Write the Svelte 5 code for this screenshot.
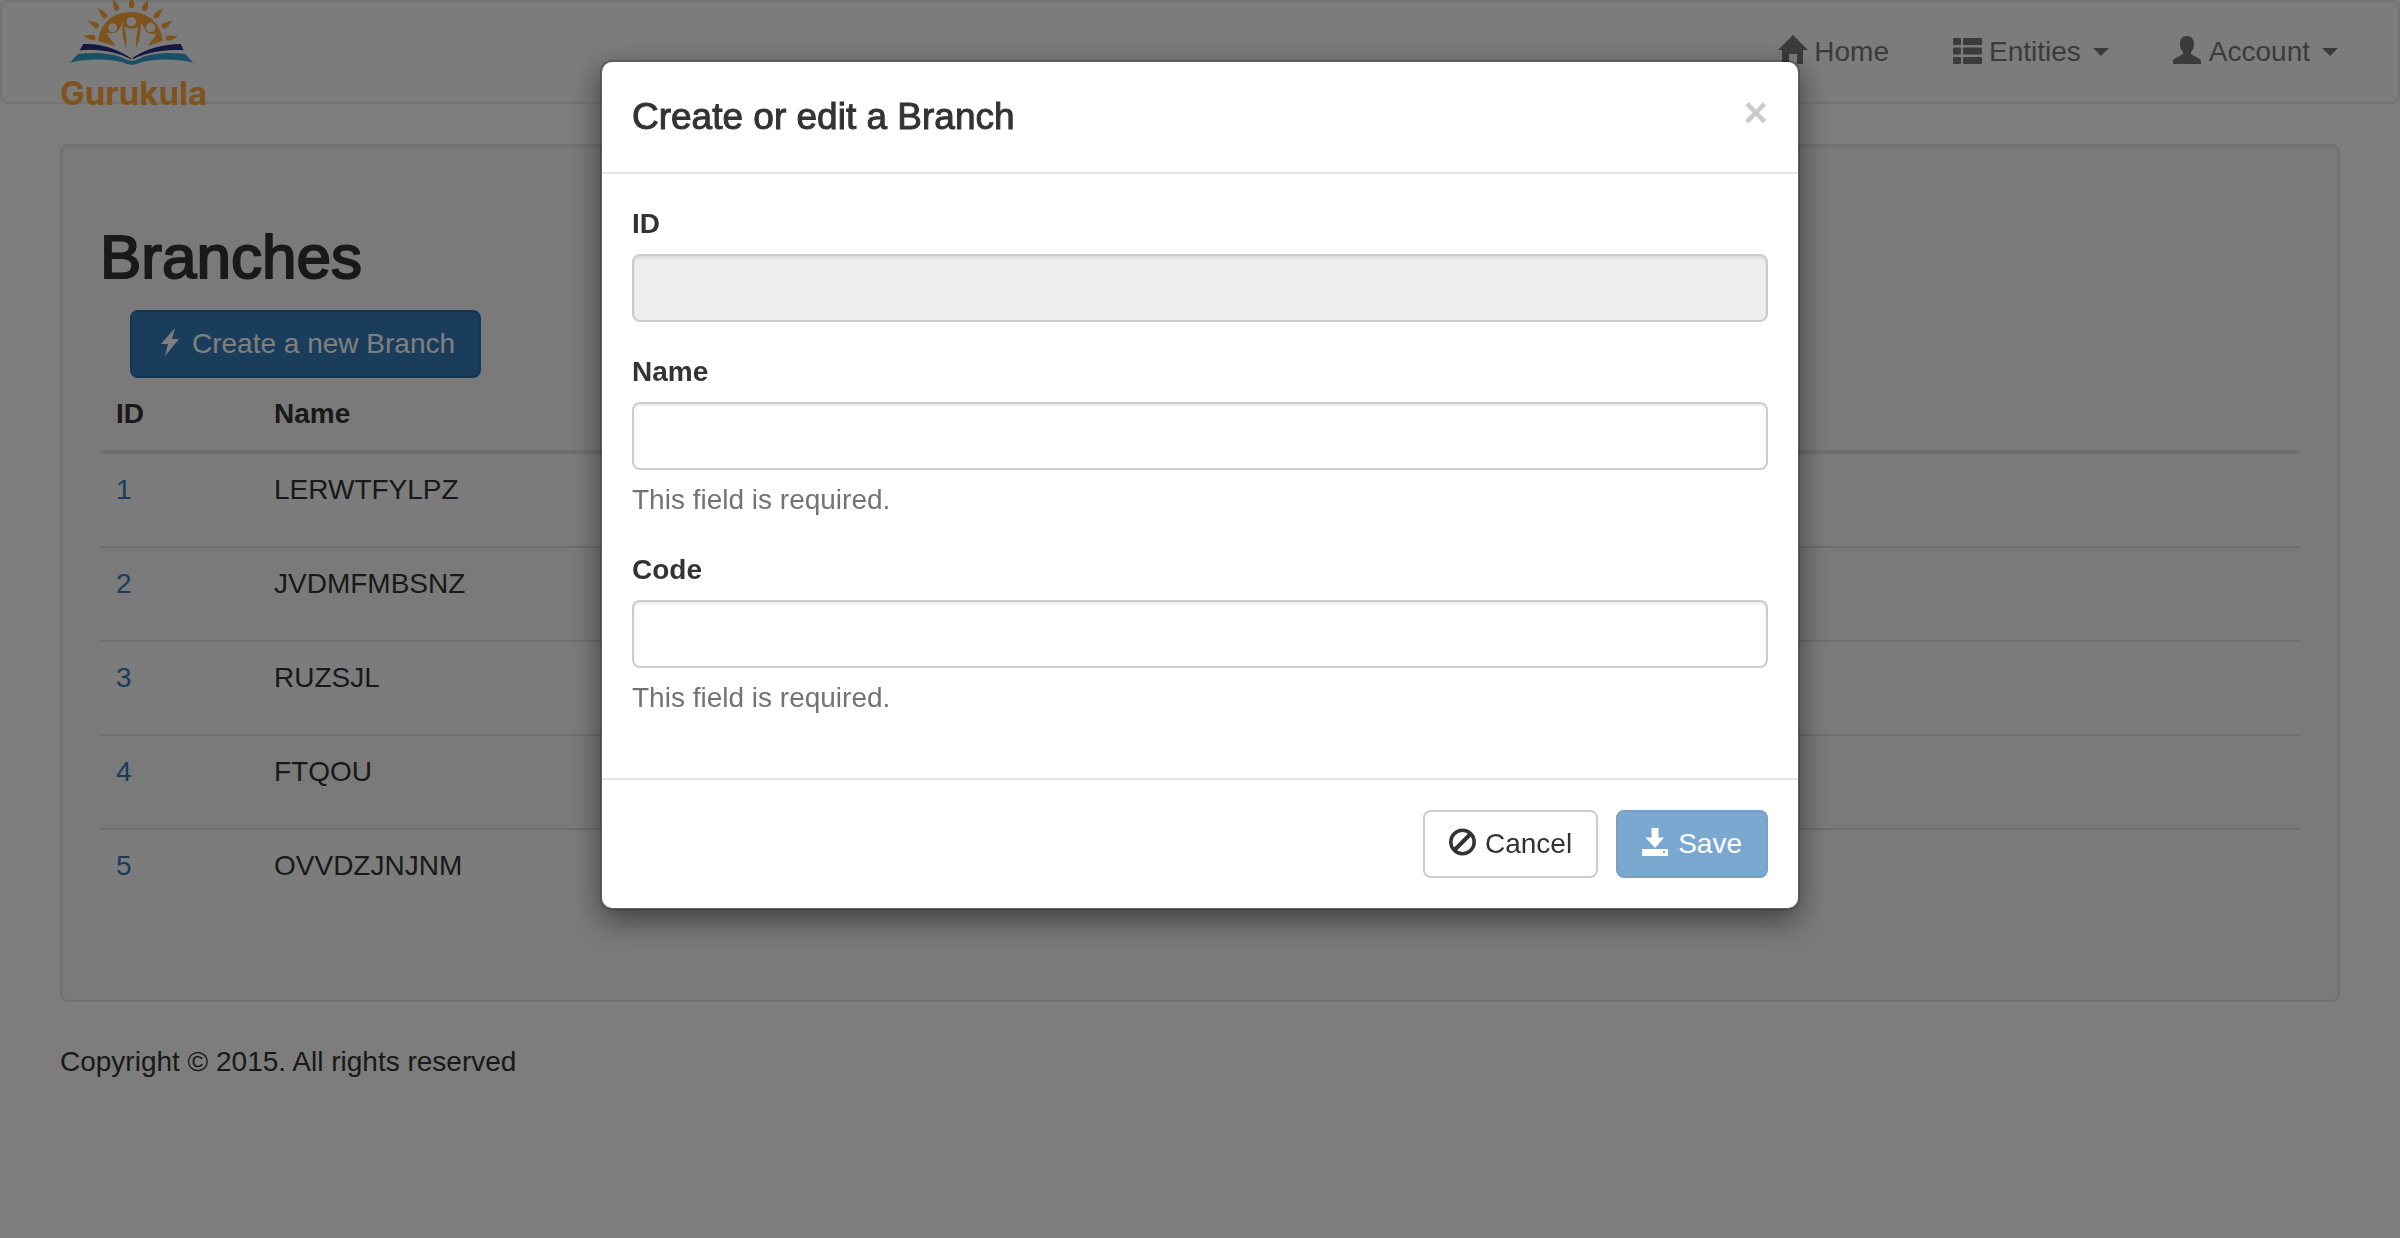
<script lang="ts">
  type Branch = { id: number; name: string };

  const branches: Branch[] = [
    { id: 1, name: 'LERWTFYLPZ' },
    { id: 2, name: 'JVDMFMBSNZ' },
    { id: 3, name: 'RUZSJL' },
    { id: 4, name: 'FTQOU' },
    { id: 5, name: 'OVVDZJNJNM' }
  ];

  // Sun rays: centre point and rotation of each one
  const rays = [
    { x: 268, y: 111, r: 100 },
    { x: 280, y: 71, r: 122 },
    { x: 307, y: 39, r: 138 },
    { x: 346, y: 15, r: 158 },
    { x: 395, y: 6, r: 180 },
    { x: 438, y: 15, r: 202 },
    { x: 476, y: 39, r: 222 },
    { x: 502, y: 72, r: 238 },
    { x: 516, y: 113, r: 260 }
  ];

  let name = $state('');
  let code = $state('');
</script>

<div class="page">
  <nav class="navbar">
    <a class="brand" href="#/">
      <svg class="mark" viewBox="180 6 444 192" aria-hidden="true">
        {#each rays as ray}
          <path
            class="orange"
            transform="translate({ray.x} {ray.y}) rotate({ray.r})"
            d="M0 20C-3 8-8-2-8-10C-8-16-5-19 0-19C5-19 8-16 8-10C8-2 3 8 0 20Z"
          />
        {/each}
        <path class="orange" d="M295 124C299 70 340 36 391 36C443 36 484 70 488 122L444 137L472 98C463 104 446 104 437 92L425 69C419 80 407 86 395 86C383 86 372 80 366 66C364 90 344 106 318 98L347 138Z" />
        <path class="orange" d="M367 72C366 100 370 124 380 147C380 120 377 94 372 72ZM423 66C422 98 419 122 408 145C407 120 411 96 416 72Z" />
        <circle class="hole" cx="338" cy="83" r="13" />
        <circle class="hole" cx="394" cy="65" r="14" />
        <circle class="hole" cx="452" cy="82" r="14" />
        <path class="navy" d="M250 132C304 130 356 148 395 176L393 178C352 156 296 145 239 151Z" />
        <path class="navy" d="M542 132C488 132 434 148 397 174L400 177C440 158 494 146 551 151Z" />
        <path class="cyan" d="M234 162C290 155 346 160 376 178C389 184 401 184 414 178C444 160 500 155 556 162L580 188C524 174 462 176 418 188C402 196 388 196 372 188C328 176 266 174 209 188Z" />
      </svg>
      <span class="brand-name">Gurukula</span>
    </a>
    <ul class="nav">
      <li>
        <a href="#/home">
          <svg class="icon" viewBox="0 0 28 28" aria-hidden="true">
            <path d="M15 -3L30 12H25V26H19V16H11V26H4V12H0Z" />
          </svg>
          <span>Home</span>
        </a>
      </li>
      <li>
        <a href="#/entities">
          <svg class="icon" viewBox="0 0 28 28" aria-hidden="true">
            <rect x="0" y="0" width="8" height="7" rx="1" />
            <rect x="10" y="0" width="19" height="7" rx="1" />
            <rect x="0" y="9.500" width="8" height="7" rx="1" />
            <rect x="10" y="9.500" width="19" height="7" rx="1" />
            <rect x="0" y="19" width="8" height="7" rx="1" />
            <rect x="10" y="19" width="19" height="7" rx="1" />
          </svg>
          <span>Entities</span>
          <span class="caret"></span>
        </a>
      </li>
      <li>
        <a href="#/account">
          <svg class="icon" viewBox="0 0 28 28" aria-hidden="true">
            <path d="M14 -2C18.500 -2 21 1 21 6C21 10 20 12 18 14V16L27 21Q28 22 28 23V26H0V23Q0 22 1 21L10 16V14C8 12 7 10 7 6C7 1 9.500 -2 14 -2Z" />
          </svg>
          <span>Account</span>
          <span class="caret"></span>
        </a>
      </li>
    </ul>
  </nav>

  <main class="well">
    <h2>Branches</h2>
    <button class="btn primary create" type="button">
      <svg class="icon" viewBox="0 0 28 28" aria-hidden="true">
        <path d="M19 -2L5 14H12L9 26L23 9H16Z" />
      </svg>
      <span>Create a new Branch</span>
    </button>
    <table>
      <thead>
        <tr><th class="id-col" scope="col">ID</th><th scope="col">Name</th></tr>
      </thead>
      <tbody>
        {#each branches as branch (branch.id)}
          <tr>
            <td><a href="#/branch/{branch.id}">{branch.id}</a></td>
            <td>{branch.name}</td>
          </tr>
        {/each}
      </tbody>
    </table>
  </main>

  <footer class="copyright">Copyright © 2015. All rights reserved</footer>
</div>

<div class="backdrop">
  <div class="modal" role="dialog" aria-modal="true" aria-labelledby="modal-title">
    <form onsubmit={(event) => event.preventDefault()}>
      <header class="modal-header">
        <h4 id="modal-title">Create or edit a Branch</h4>
        <button class="close" type="button" aria-label="Close">×</button>
      </header>
      <div class="modal-body">
        <div class="field">
          <label for="branch-id">ID</label>
          <input id="branch-id" type="text" readonly />
        </div>
        <div class="field">
          <label for="branch-name">Name</label>
          <input id="branch-name" type="text" bind:value={name} />
          <p class="help">This field is required.</p>
        </div>
        <div class="field">
          <label for="branch-code">Code</label>
          <input id="branch-code" type="text" bind:value={code} />
          <p class="help">This field is required.</p>
        </div>
      </div>
      <footer class="modal-footer">
        <button class="btn default" type="button">
          <svg class="icon" viewBox="0 0 28 28" aria-hidden="true">
            <circle class="ring" cx="13.500" cy="12" r="11.700" />
            <path class="ring slash" d="M5.500 20L21.500 4" />
          </svg>
          <span>Cancel</span>
        </button>
        <button class="btn primary" type="submit" disabled>
          <svg class="icon" viewBox="0 0 28 28" aria-hidden="true">
            <path fill-rule="evenodd" d="M9.500 -2H16.500V7.500H22L13 18L3.500 7.500H9.500ZM0 19H25L26 20V26H0ZM21 21V23H23V21Z" />
          </svg>
          <span>Save</span>
        </button>
      </footer>
    </form>
  </div>
</div>

<style>
  :global(body) {
    margin: 0;
    background: #fafafa;
    color: #333;
    font: 28px/40px 'Liberation Sans', Arial, sans-serif;
  }

  a {
    color: #337ab7;
    text-decoration: none;
  }

  .navbar {
    display: flex;
    justify-content: space-between;
    box-sizing: border-box;
    height: 104px;
    padding: 0 60px 0 58px;
    margin-bottom: 40px;
    background: #f8f8f8;
    border: 2px solid #e7e7e7;
    border-radius: 8px;
  }

  .brand {
    display: flex;
    flex-direction: column;
    gap: 7px;
  }

  .mark {
    display: block;
    flex: none;
    width: 148px;
    height: 64px;
    overflow: visible;
  }

  .orange { fill: #ffa63a; }
  .hole { fill: #f8f8f8; }
  .navy { fill: #2b2f83; }
  .cyan { fill: #35a0cc; }

  .brand-name {
    color: #ffa63a;
    font: 700 33px/40px Inter, sans-serif;
  }

  .nav {
    display: flex;
    align-items: center;
    gap: 64px;
    margin: 0;
    padding: 0;
    list-style: none;
  }

  .nav a {
    display: flex;
    align-items: center;
    gap: 8px;
    color: #777;
  }

  .icon {
    flex: none;
    width: 28px;
    height: 28px;
    overflow: visible;
    fill: currentColor;
  }

  .caret {
    margin-left: 4px;
    border-top: 8px solid;
    border-right: 8px solid transparent;
    border-left: 8px solid transparent;
  }

  .well {
    margin: 0 60px 40px;
    padding: 38px;
    background: #f5f5f5;
    border: 2px solid #e3e3e3;
    border-radius: 8px;
    box-shadow: inset 0 2px 2px rgba(0, 0, 0, 0.05);
  }

  h2 {
    margin: 40px 0 20px;
    font-size: 62px;
    font-weight: 400;
    line-height: 66px;
    -webkit-text-stroke: 2px;
  }

  .btn {
    display: inline-flex;
    align-items: center;
    gap: 8px;
    padding: 12px 24px;
    font: inherit;
    border: 2px solid;
    border-radius: 8px;
  }

  .default {
    color: #333;
    background: #fff;
    border-color: #ccc;
  }

  .primary {
    color: #fff;
    background: #337ab7;
    border-color: #2e6da4;
  }

  .primary:disabled { opacity: 0.65; }

  .create {
    display: flex;
    margin-left: 30px;
  }

  table {
    width: 100%;
    margin-bottom: 40px;
    border-spacing: 0;
  }

  th,
  td {
    padding: 16px;
    text-align: left;
    vertical-align: top;
  }

  th { border-bottom: 4px solid #ddd; }

  .id-col { width: 126px; }

  td {
    padding-bottom: 36px;
    border-top: 2px solid #ddd;
  }

  tbody tr:first-child td { border-top: 0; }
  tbody tr:nth-child(odd) { background: #f9f9f9; }

  .copyright { margin: 0 60px; }

  .backdrop {
    position: fixed;
    inset: 0;
    overflow: auto;
    background: rgba(0, 0, 0, 0.5);
  }

  .modal {
    box-sizing: border-box;
    width: 1200px;
    max-width: 100%;
    margin: 60px auto;
    background: #fff;
    background-clip: padding-box;
    border: 2px solid rgba(0, 0, 0, 0.2);
    border-radius: 12px;
    box-shadow: 0 10px 30px rgba(0, 0, 0, 0.5);
  }

  .modal-header {
    display: flex;
    align-items: flex-start;
    justify-content: space-between;
    padding: 30px;
    border-bottom: 2px solid #e5e5e5;
  }

  h4 {
    margin: 0;
    font-size: 37px;
    font-weight: 400;
    line-height: 50px;
    -webkit-text-stroke: 1px;
  }

  .close {
    padding: 0;
    color: #000;
    background: none;
    border: 0;
    font: 700 42px/42px 'Liberation Sans', Arial, sans-serif;
    opacity: 0.2;
  }

  .modal-body {
    display: grid;
    gap: 30px;
    padding: 30px 30px 60px;
  }

  .field {
    display: grid;
    gap: 10px;
  }

  label { font-weight: 700; }

  input {
    box-sizing: border-box;
    width: 100%;
    height: 68px;
    padding: 12px 24px;
    color: #555;
    font: inherit;
    background: #fff;
    border: 2px solid #ccc;
    border-radius: 8px;
    box-shadow: inset 0 2px 2px rgba(0, 0, 0, 0.075);
  }

  input:read-only { background: #eee; }

  .help {
    margin: 0;
    color: #737373;
  }

  .modal-footer {
    display: flex;
    justify-content: flex-end;
    gap: 18px;
    padding: 30px;
    border-top: 2px solid #e5e5e5;
  }

  .ring {
    fill: none;
    stroke: currentColor;
    stroke-width: 3.500;
  }

  .slash { stroke-width: 4; }
</style>
